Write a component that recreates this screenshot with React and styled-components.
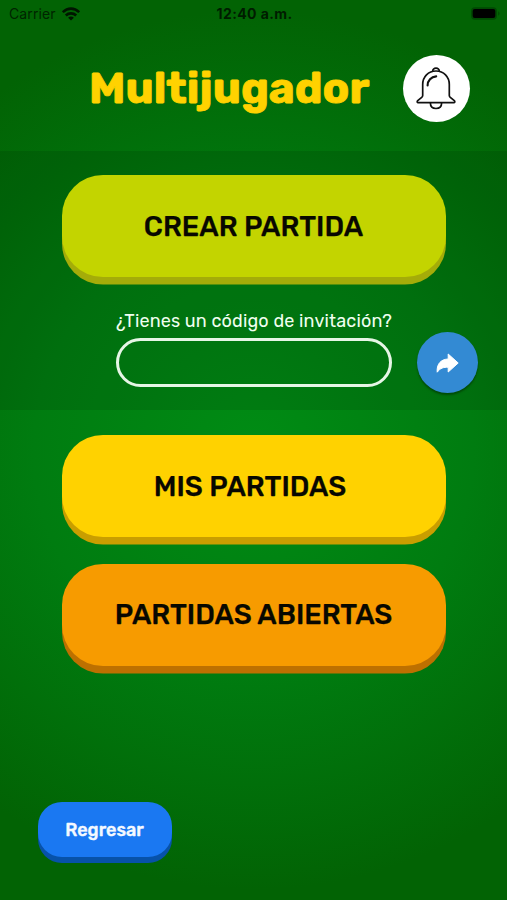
import React from 'react';
import styled, { createGlobalStyle } from 'styled-components';

const GlobalStyle = createGlobalStyle`
  * { box-sizing: border-box; }
  body { margin: 0; background: #006204; }
  button, input { font: inherit; border: 0; padding: 0; margin: 0; }
`;

const Screen = styled.div`
  display: flex;
  flex-direction: column;
  width: 507px;
  height: 900px;
  overflow: hidden;
  font-family: Rubik, Inter, sans-serif;
  background: radial-gradient(circle 440px at 50% 50%, #008c14 0%, #007c10 50%, #026304 100%);
`;

const StatusBar = styled.div`
  display: grid;
  grid-template-columns: 1fr auto 1fr;
  align-items: center;
  height: 27px;
  padding: 0 7px 0 9px;
  font-family: Inter, sans-serif;
  color: #001c00;
`;

const Carrier = styled.div`
  display: flex;
  align-items: center;
  gap: 6px;
  font-size: 14px;
  letter-spacing: 0.1px;
  color: #002400;
`;

const Clock = styled.div`
  font-size: 14px;
  font-weight: 700;
  letter-spacing: 0.4px;
`;

const BatteryIcon = styled.svg`
  justify-self: end;
`;

const Header = styled.header`
  display: flex;
  align-items: center;
  justify-content: space-between;
  height: 124px;
  padding: 0 37px 1px 89px;
`;

const Title = styled.h1`
  margin: 0;
  padding-bottom: 2px;
  font-size: 44px;
  line-height: 50px;
  font-weight: 700;
  color: #ffd200;
  white-space: nowrap;
  -webkit-text-stroke: 0.8px #ffd200;
`;

const BellButton = styled.button`
  display: grid;
  place-items: center;
  width: 67px;
  height: 67px;
  padding-right: 1px;
  border-radius: 50%;
  background: #fff;
`;

const CreatePanel = styled.section`
  display: flex;
  flex-direction: column;
  align-items: center;
  height: 259.4px;
  padding-top: 24.3px;
  background: rgba(0, 0, 0, 0.1);
`;

const BigButton = styled.button`
  flex: none;
  width: 384px;
  height: 102px;
  padding: 0 ${(p) => p.$inset || 0}px 0 0;
  border-radius: 41px;
  background: ${(p) => p.$face};
  box-shadow: 0 7.5px 0 ${(p) => p.$edge};
  color: #080800;
  font-size: 28px;
  font-weight: 500;
  white-space: nowrap;
  -webkit-text-stroke: 0.25px #080800;
`;

const CodeRow = styled.div`
  display: grid;
  grid-template-columns: 276px 61px;
  column-gap: 24.5px;
  align-self: stretch;
  margin: 31.8px 0 0 116px;
  align-items: center;
`;

const CodeLabel = styled.label`
  grid-column: 1 / -1;
  height: 23px;
  line-height: 25px;
  font-size: 18px;
  color: #f0fff0;
  white-space: nowrap;
  letter-spacing: 0.16px;
`;

const CodeInput = styled.input`
  width: 276px;
  height: 49px;
  border: 3px solid #e6f6e6;
  border-radius: 25px;
  background: transparent;
`;

const SendButton = styled.button`
  display: grid;
  place-items: center;
  width: 61px;
  height: 61px;
  border-radius: 50%;
  background: #338ad3;
  box-shadow: 0 2px 2px rgba(0, 50, 0, 0.6);
`;

const GameList = styled.section`
  display: flex;
  flex-direction: column;
  align-items: center;
  gap: 26.4px;
  padding-top: 25px;
`;

const Footer = styled.footer`
  margin-top: auto;
  padding: 0 0 43px 37.5px;
`;

const BackButton = styled.button`
  display: block;
  width: 134px;
  height: 55px;
  border-radius: 24px;
  background: #1a78f2;
  box-shadow: 0 6px 0 #0752a9;
  color: #f4f9ff;
  font-size: 18px;
  font-weight: 500;
  -webkit-text-stroke: 0.4px #f4f9ff;
`;

export default function App() {
  return (
    <Screen>
      <GlobalStyle />
      <StatusBar>
        <Carrier>
          Carrier
          <svg width="18" height="14" viewBox="0 0 18 14" fill="none" stroke="#001500" strokeWidth="2.6">
            <path d="M.8 5.200C5.600 .4 12.400 .4 17.200 5.200" />
            <path d="M3.800 8.500c2.900-2.800 7.500-2.800 10.400 0" />
            <path d="M6.100 10.700c1.700-1.500 4.100-1.500 5.800 0L9 13.600z" fill="#001500" stroke="none" />
          </svg>
        </Carrier>
        <Clock>12:40 a.m.</Clock>
        <BatteryIcon width="30" height="14" viewBox="0 0 30 14">
          <rect x="1" y="0.200" width="26" height="12.600" rx="4" fill="#004a02" />
          <rect x="2.700" y="2" width="22.600" height="9" rx="2" fill="#000" />
          <path d="M28.200 4.300c1.800.7 1.800 3.700 0 4.400z" fill="#004a02" />
        </BatteryIcon>
      </StatusBar>

      <Header>
        <Title>Multijugador</Title>
        <BellButton aria-label="Notificaciones">
          <svg width="40" height="44" viewBox="0 0 40 44" fill="none" stroke="#111" strokeWidth="1.700" strokeLinejoin="round" strokeLinecap="round">
            <path d="M16.700 4.200C16.500 2.400 18 1.200 20 1.200s3.500 1.200 3.300 3" />
            <path d="M6.700 28.500V17.500C6.700 9.800 12.300 4 20 4s13.300 5.800 13.300 13.500v11c0 .8.400 1.400 1 1.900l4 3.300c.9.800.6 2-.5 2H2.200c-1.100 0-1.400-1.200-.5-2l4-3.300c.6-.5 1-1.100 1-1.900z" />
            <path d="M14.400 36c0 3.600 2.400 5.500 5.600 5.500s5.600-1.900 5.600-5.500" />
            <path d="M11.600 18.500c0-5 3.500-8.700 8.600-9.100" strokeWidth="2.100" />
          </svg>
        </BellButton>
      </Header>

      <CreatePanel>
        <BigButton $face="#c3d400" $edge="#a4ac09">CREAR PARTIDA</BigButton>
        <CodeRow>
          <CodeLabel htmlFor="code">¿Tienes un código de invitación?</CodeLabel>
          <CodeInput id="code" />
          <SendButton aria-label="Enviar">
            <svg width="24" height="22" viewBox="0 0 24 22" fill="#fff" stroke="#fff" strokeWidth="1" strokeLinejoin="round">
              <path d="M13.200 2l10 9-10 9v-4.700c-4.500-.3-8 .8-11 4.900C1.500 12.600 5.400 7.300 13.200 7z" />
            </svg>
          </SendButton>
        </CodeRow>
      </CreatePanel>

      <GameList>
        <BigButton $face="#ffd200" $edge="#c99e00" $inset={7}>MIS PARTIDAS</BigButton>
        <BigButton $face="#f79b00" $edge="#bd7000">PARTIDAS ABIERTAS</BigButton>
      </GameList>

      <Footer>
        <BackButton>Regresar</BackButton>
      </Footer>
    </Screen>
  );
}
